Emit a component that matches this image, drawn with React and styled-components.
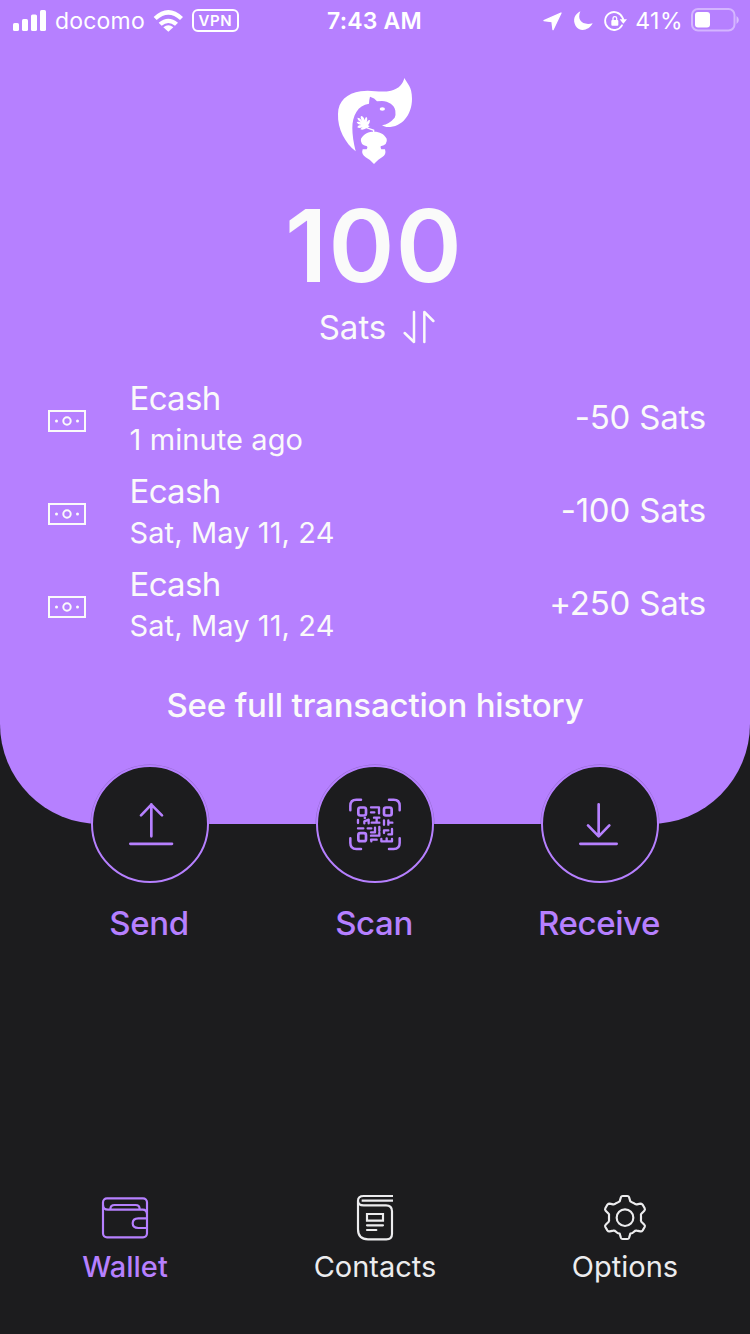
import React from "react";
import styled, { createGlobalStyle } from "styled-components";

const purple = "#b680ff";
const dark = "#1c1c1e";
const light = "#fafafa";

const GlobalStyle = createGlobalStyle`
  * { box-sizing: border-box; }
  body { margin: 0; background: ${dark}; font-family: Inter, "Liberation Sans", sans-serif; }
`;

const Screen = styled.div`
  width: 750px;
  height: 1334px;
  display: flex;
  flex-direction: column;
  overflow: hidden;
  background: ${dark};
  color: ${light};
`;

const Label = styled.span`
  display: block;
  white-space: nowrap;
  font-size: ${(p) => p.$size}px;
  line-height: ${(p) => p.$line}px;
  font-weight: ${(p) => p.$weight || 400};
  letter-spacing: ${(p) => p.$track || 0}px;
`;

const Balance = styled.section`
  height: 824px;
  flex: none;
  display: flex;
  flex-direction: column;
  background: ${purple};
  border-radius: 0 0 100px 100px;
`;

const StatusBar = styled.header`
  height: 42px;
  display: grid;
  grid-template-columns: 1fr auto 1fr;
  align-items: center;
  padding: 0 11px 1px 13px;
  color: #fff;
`;

const StatusGroup = styled.div`
  display: flex;
  align-items: center;
  justify-content: ${(p) => (p.$end ? "flex-end" : "flex-start")};
  gap: ${(p) => p.$gap}px;
`;

const Clock = styled(Label)`
  margin-right: 3px;
`;

const VpnBadge = styled.div`
  width: 47px;
  height: 23px;
  margin-left: 1px;
  border: 2px solid #fff;
  border-radius: 6px;
  display: flex;
  justify-content: center;
  align-items: center;
`;

const Glyph = styled.svg`
  display: block;
  flex: none;
  fill: none;
  stroke: currentColor;
  stroke-linecap: round;
  stroke-linejoin: round;
`;

const SolidGlyph = styled(Glyph)`
  fill: currentColor;
  stroke: none;
`;

const Amount = styled.div`
  display: flex;
  flex-direction: column;
  align-items: center;
  padding-top: 28px;
`;

const Total = styled(Label)`
  margin: 16px 2px 0 0;
`;

const Unit = styled.div`
  display: flex;
  align-items: center;
  gap: 17px;
  margin-top: 1px;
  padding-left: 6px;
`;

const History = styled.div`
  display: flex;
  flex-direction: column;
  padding: 0 44px 0 48px;
  margin-top: 30px;
`;

const Transaction = styled.div`
  height: 93px;
  display: grid;
  grid-template-columns: 81.5px 1fr auto;
  align-items: start;
`;

const NoteIcon = styled(Glyph)`
  margin-top: 33px;
`;

const Value = styled(Label)`
  margin-top: 20px;
`;

const FullHistory = styled.div`
  display: flex;
  justify-content: center;
  margin-top: 27px;
`;

const Actions = styled.div`
  display: grid;
  grid-template-columns: repeat(3, 225px);
  justify-content: center;
  margin-top: -59px;
  color: ${purple};
`;

const Action = styled.div`
  display: flex;
  flex-direction: column;
  align-items: center;
  gap: 18px;
`;

const ActionName = styled(Label)`
  margin-right: 2px;
`;

const Circle = styled.div`
  width: 118px;
  height: 118px;
  border: 2px solid ${purple};
  border-radius: 50%;
  background: ${dark};
  display: flex;
  align-items: center;
  justify-content: center;
  box-shadow: 0 0 0 0.5px rgba(28, 28, 30, 0.25);
`;

const Tabs = styled.nav`
  margin-top: auto;
  height: 140px;
  display: grid;
  grid-template-columns: repeat(3, 250px);
`;

const Tab = styled.div`
  display: flex;
  flex-direction: column;
  align-items: center;
  gap: 3px;
  color: ${(p) => (p.$active ? purple : "#ececee")};
`;

const Signal = () => (
  <SolidGlyph width="34" height="22" viewBox="0 0 34 22">
    <rect x="0" y="13" width="6" height="8" rx="1.6" />
    <rect x="9" y="9" width="6" height="12" rx="1.6" />
    <rect x="18" y="4.5" width="6" height="16.5" rx="1.6" />
    <rect x="27" y="0" width="6" height="21" rx="1.6" />
  </SolidGlyph>
);

const Wifi = () => (
  <SolidGlyph width="30" height="24" viewBox="462 25 90 72">
    <path d="M508 93L493 80Q508 68 523 80Z" />
    <path d="M479 66Q508 43 537 66L528 75Q508 59 488 75Z" />
    <path d="M464 49Q508 7 552 49L543 58Q508 27 473 58Z" />
  </SolidGlyph>
);

const StatusIcons = () => (
  <Glyph width="86" height="30" viewBox="32 17 258 90">
    <path d="M41 61L92 38L68 88L65 64Z" fill="currentColor" strokeWidth="4" />
    <path d="M150 33C139 60 156 76 187 69C176 91 148 96 136 77C126 58 133 42 150 33Z" fill="currentColor" stroke="none" />
    <path d="M276 51A27 27 0 1 0 275 75M276 51Q279 55 279 61" strokeWidth="5.5" />
    <path d="M268 57H290L279 70Z" fill="currentColor" stroke="none" />
    <rect x="243" y="59" width="21" height="17" rx="3" fill="currentColor" stroke="none" />
    <path d="M248 60V54Q248 49 253.5 49Q259 49 259 54V60" strokeWidth="4" />
  </Glyph>
);

const Battery = () => (
  <Glyph width="48" height="25" viewBox="0 0 48 25">
    <rect x="1" y="1" width="42.5" height="21.5" rx="6" strokeWidth="2" opacity=".42" />
    <rect x="4" y="4" width="15" height="15.5" rx="3" fill="currentColor" stroke="none" />
    <path d="M45.5 8Q47.8 9.5 47.8 12T45.5 16Z" fill="currentColor" stroke="none" opacity=".48" />
  </Glyph>
);

const Logo = () => (
  <SolidGlyph width="100" height="100" viewBox="0 0 300 300" color="#fff">
    <path d="M238 24C247 42 261 49 261 86C261 137 228 174 184 171Q177 170 171 166Q193 162 209 143Q213 136 211 122C209 105 190 94 171 93L156 94Q149 84 135 80Q132 90 132 101C98 105 82 138 82 174Q82 204 92 244C61 220 37 176 39 132C39 94 66 70 107 64C141 58 165 70 198 62C224 56 234 40 238 24Z" />
    <ellipse cx="172" cy="117" rx="8" ry="5" />
    <path d="M147 185C165 185 176 191 185 206Q189 223 167 229Q166 234 169 238L180 238Q185 254 171 262Q163 266 147 282Q134 268 122 262Q108 252 113 238L125 238Q129 234 126 229Q104 223 108 206C117 190 131 185 147 185Z" />
    <path d="M97 143Q106 143 111 153Q104 140 109 138Q117 140 119 151Q121 141 124 141Q129 145 125 157Q131 148 135 151Q135 160 129 166Q134 167 134 169Q130 173 126 172L148 179V187H144V182L124 175Q114 181 106 178Q109 174 113 171Q103 176 97 172Q99 165 109 165Q97 163 95 156Q102 154 107 157Q97 151 97 143Z" />
  </SolidGlyph>
);

const Swap = () => (
  <Glyph width="34" height="36" viewBox="399 357 102 108" strokeWidth="7.5">
    <path d="M404 429L432 456V366M463 456V366L490 393" />
  </Glyph>
);

const Note = () => (
  <NoteIcon width="38" height="22" viewBox="0 0 38 22" strokeWidth="2">
    <path d="M1 1H37V21H1Z" strokeLinejoin="miter" />
    <circle cx="19" cy="11" r="3.7" />
    <circle cx="8.5" cy="11" r="1.5" fill="currentColor" stroke="none" />
    <circle cx="29.5" cy="11" r="1.5" fill="currentColor" stroke="none" />
  </NoteIcon>
);

const ActionGlyph = ({ children }) => (
  <Glyph width="114" height="114" viewBox="24 20 342 342" strokeWidth="8">{children}</Glyph>
);

const SendIcon = () => (
  <ActionGlyph><path d="M199 228V132M168 165L199 133L231 165M136 250.5H261" /></ActionGlyph>
);

const ReceiveIcon = () => (
  <ActionGlyph><path d="M191 132V228M159 195L191 228L223 195M136 250.5H245" /></ActionGlyph>
);

const ScanIcon = () => (
  <ActionGlyph>
    <path strokeWidth="7.5" d="M121 150V136Q121 118 139 118H153M237 118H251Q269 118 269 136V150M269 234V248Q269 266 251 266H237M153 266H139Q121 266 121 248V234" />
    <g strokeWidth="8">
      <rect x="145" y="141.5" width="23" height="24" rx="6" />
      <rect x="222" y="141.5" width="23" height="24" rx="6" />
      <rect x="145" y="218.5" width="23" height="24" rx="6" />
    </g>
    <g strokeWidth="7">
      <path d="M183 141H207V159M183 156H193" />
      <path d="M144 179V188M163 189V183L176 178V189M164 173H165" />
      <path d="M192 172H208M200 172V187M185 187H208" />
      <path d="M144 204H160M173 204H184M208 200V212" />
      <path d="M183 216H195V202M208 218V226M183 226H208" />
      <path d="M183 238H200M184 238V243" />
      <path d="M222 180V193M235 187H247M235 180V193" />
      <path d="M222 218V210H235M246 206V222H235" />
      <path d="M214 243H246M214 236V243M230 234V243M246 236V243" />
    </g>
  </ActionGlyph>
);

const WalletIcon = () => (
  <Glyph width="50" height="50" viewBox="90 28 150 150" strokeWidth="6.5">
    <rect x="99" y="41" width="132" height="117" rx="12" />
    <path d="M99 61Q99 75 114 75H218Q231 75 231 89M121 74Q121 61 134 61H197Q209 61 209 74M231 101H205Q188 101 188 116Q188 130 205 130H231" />
  </Glyph>
);

const ContactsIcon = () => (
  <Glyph width="50" height="50" viewBox="150 28 150 150" strokeWidth="6.5">
    <path strokeLinecap="butt" d="M279 34H191Q174 34 174 48Q174 62 191 62H258Q276 62 276 80V148Q276 164 259 164H204Q174 164 174 134V48M185 48H279" />
    <path strokeLinejoin="miter" d="M201 88H249V108H201Z" />
    <path d="M201 122H249M201 136H229" />
  </Glyph>
);

const OptionsIcon = () => (
  <Glyph width="50" height="50" viewBox="120 28 150 150" strokeWidth="6.5">
    <circle cx="195" cy="99" r="25" />
    <path d="M183 37Q184 34 188 34H202Q206 34 207 37L211 50Q216 53 222 56Q226 60 231 59L241 57Q245 57 248 60L254 71Q256 75 253 78L244 87Q242 90 243 94V104Q242 108 244 111L253 120Q256 123 254 127L248 137Q245 141 241 140L230 138Q226 137 222 141Q217 146 211 147L207 160Q206 163 202 163H188Q184 163 183 160L179 147Q173 146 168 141Q164 137 160 138L149 140Q145 141 142 137L136 127Q134 123 137 120L146 111Q148 108 147 104V94Q148 90 146 87L137 78Q134 75 136 71L142 60Q145 57 149 57L159 59Q164 60 168 56Q174 53 179 50Z" />
  </Glyph>
);

const transactions = [
  { title: "Ecash", when: "1 minute ago", value: "-50 Sats" },
  { title: "Ecash", when: "Sat, May 11, 24", value: "-100 Sats" },
  { title: "Ecash", when: "Sat, May 11, 24", value: "+250 Sats" },
];

const actions = [
  { name: "Send", Icon: SendIcon },
  { name: "Scan", Icon: ScanIcon },
  { name: "Receive", Icon: ReceiveIcon },
];

export default function App() {
  return (
    <Screen>
      <GlobalStyle />
      <Balance>
        <StatusBar>
          <StatusGroup $gap={8}>
            <Signal />
            <Label $size={23} $line={30} $track={0.2}>docomo</Label>
            <Wifi />
            <VpnBadge><Label $size={15} $line={20} $weight={600} $track={0.6}>VPN</Label></VpnBadge>
          </StatusGroup>
          <Clock $size={23} $line={30} $weight={600} $track={0.15}>7:43&#8202;&#8202;&#8202;AM</Clock>
          <StatusGroup $end $gap={8}>
            <StatusIcons />
            <Label $size={23} $line={30} $track={0.5}>41%</Label>
            <Battery />
          </StatusGroup>
        </StatusBar>
        <Amount>
          <Logo />
          <Total $size={100} $line={120} $weight={600} $track={1.2}>100</Total>
          <Unit><Label $size={33} $line={40}>Sats</Label><Swap /></Unit>
        </Amount>
        <History>
          {transactions.map((t, i) => (
            <Transaction key={i}>
              <Note />
              <div>
                <Label $size={33} $line={42} $track={-0.7}>{t.title}</Label>
                <Label $size={29} $line={41} $track={0.1}>{t.when}</Label>
              </div>
              <Value $size={33} $line={40} $track={-0.2}>{t.value}</Value>
            </Transaction>
          ))}
        </History>
        <FullHistory>
          <Label $size={33} $line={44} $weight={500} $track={-0.17}>See full transaction history</Label>
        </FullHistory>
      </Balance>
      <Actions>
        {actions.map(({ name, Icon }) => (
          <Action key={name}>
            <Circle><Icon /></Circle>
            <ActionName $size={33} $line={44} $weight={500} $track={-0.4}>{name}</ActionName>
          </Action>
        ))}
      </Actions>
      <Tabs>
        <Tab $active><WalletIcon /><Label $size={29} $line={40} $weight={500}>Wallet</Label></Tab>
        <Tab><ContactsIcon /><Label $size={29} $line={40}>Contacts</Label></Tab>
        <Tab><OptionsIcon /><Label $size={29} $line={40}>Options</Label></Tab>
      </Tabs>
    </Screen>
  );
}
